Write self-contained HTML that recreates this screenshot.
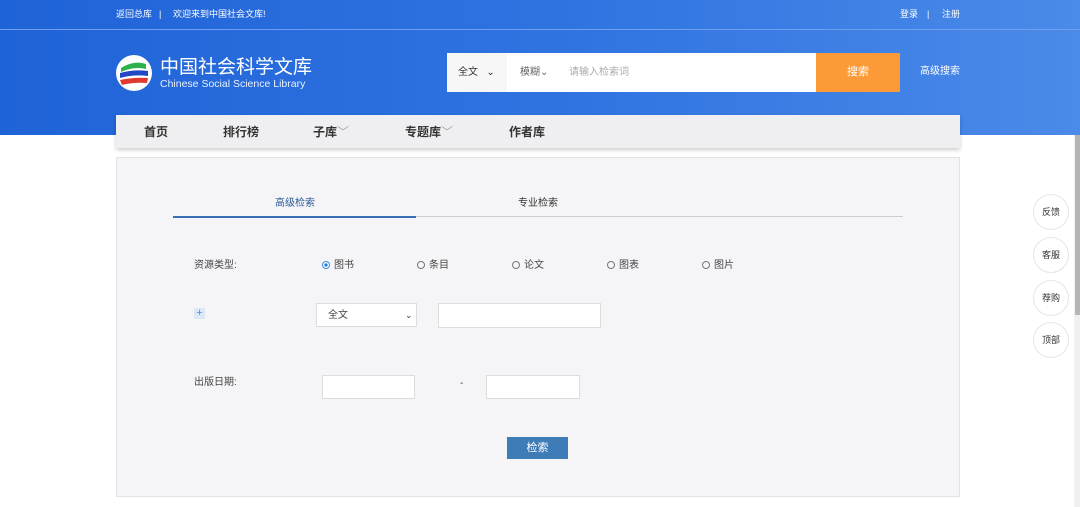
<!DOCTYPE html>
<html><head><meta charset="utf-8"><style>
*{margin:0;padding:0;box-sizing:border-box}
body{width:1080px;height:507px;overflow:hidden;background:#fff;font-family:"Liberation Sans","Noto Sans CJK SC",sans-serif;position:relative;font-size:12px;color:#333}
.hdr{position:absolute;left:0;top:0;width:1080px;height:135px;background:linear-gradient(90deg,#1f63d8 0%,#2f72e0 50%,#4a8ae8 100%)}
.top{position:absolute;left:0;top:0;width:1080px;height:30px;border-bottom:1px solid #6e9ff0;color:#fff;font-size:9px}
.a{position:absolute;white-space:nowrap;line-height:1.2}
.nav{position:absolute;left:116px;top:115px;width:844px;height:33px;background:#efeff1;box-shadow:0 2px 4px rgba(0,0,0,.2)}
.nav span{position:absolute;top:10px;font-size:12px;font-weight:bold;color:#333;line-height:14px}
.panel{position:absolute;left:116px;top:157px;width:844px;height:340px;background:#f5f5f7;border:1px solid #e3e3e6}
.r{position:absolute;font-size:10px;color:#444;white-space:nowrap;line-height:12px}
.r i{display:inline-block;width:8px;height:8px;border:1px solid #777;border-radius:50%;margin-right:4px;vertical-align:-1px}
.box{position:absolute;background:#fff;border:1px solid #ddd}
.side{position:absolute;left:1033px;width:36px;height:36px;border-radius:50%;background:#fff;border:1px solid #e5e5e5;font-size:9px;text-align:center;line-height:34px;color:#333}
</style></head><body>
<div class="hdr"></div>
<div class="top">
<span class="a" style="left:116px;top:9px">返回总库</span>
<span class="a" style="left:159px;top:9px">|</span>
<span class="a" style="left:173px;top:9px">欢迎来到中国社会文库!</span>
<span class="a" style="left:900px;top:9px">登录</span>
<span class="a" style="left:927px;top:9px">|</span>
<span class="a" style="left:942px;top:9px">注册</span>
</div>
<svg class="a" style="left:116px;top:54px" width="36" height="38" viewBox="0 0 36 38"><circle cx="18" cy="19" r="18" fill="#fff"/><path d="M5 14 Q18 6 30 10 L30 15 Q18 12 5 18Z" fill="#2bb24c"/><path d="M4 19 Q18 15 32 17 L32 22 Q18 20 4 24Z" fill="#2147c4"/><path d="M4 26 Q18 23 32 24 L31 29 Q18 28 6 31Z" fill="#e03a2e"/></svg>
<div class="a" style="left:160px;top:57px;color:#fff;font-size:19px;line-height:21px">中国社会科学文库</div>
<div class="a" style="left:160px;top:78px;color:#e8f0ff;font-size:10.5px;line-height:12px">Chinese Social Science Library</div>
<div class="a" style="left:447px;top:53px;width:369px;height:39px;background:#fff"></div>
<div class="a" style="left:447px;top:53px;width:60px;height:39px;background:#f7f7f7"></div>
<div class="a" style="left:458px;top:67px;font-size:10px;color:#333">全文 &nbsp;&nbsp;⌄</div>
<div class="a" style="left:520px;top:67px;font-size:10px;color:#666">模糊⌄</div>
<div class="a" style="left:569px;top:67px;font-size:10px;color:#aaa">请输入检索词</div>
<div class="a" style="left:816px;top:53px;width:84px;height:39px;background:#fd9a38;color:#fff;font-size:11px;text-align:center;line-height:39px">搜索</div>
<div class="a" style="left:920px;top:66px;font-size:10px;color:#fff">高级搜索</div>
<div class="nav">
<span style="left:28px">首页</span><span style="left:107px">排行榜</span><span style="left:197px">子库<b style="font-weight:normal;color:#aaa">﹀</b></span><span style="left:289px">专题库<b style="font-weight:normal;color:#aaa">﹀</b></span><span style="left:393px">作者库</span>
</div>
<div class="panel"></div>
<div class="a" style="left:173px;top:216px;width:730px;height:1px;background:#ccc"></div>
<div class="a" style="left:173px;top:216px;width:243px;height:2px;background:#3a6fb5"></div>
<div class="a" style="left:275px;top:198px;font-size:10px;color:#2c5b9a">高级检索</div>
<div class="a" style="left:518px;top:198px;font-size:10px;color:#333">专业检索</div>
<div class="r" style="left:194px;top:260px">资源类型:</div>
<div class="r" style="left:322px;top:260px"><i style="border-color:#3a8ee6;background:radial-gradient(#2a7fe0 35%,#fff 45%)"></i>图书</div>
<div class="r" style="left:417px;top:260px"><i></i>条目</div>
<div class="r" style="left:512px;top:260px"><i></i>论文</div>
<div class="r" style="left:607px;top:260px"><i></i>图表</div>
<div class="r" style="left:702px;top:260px"><i></i>图片</div>
<div class="a" style="left:194px;top:308px;width:11px;height:11px;background:#dde8f7;color:#5b8fd6;font-size:11px;line-height:10px;text-align:center">+</div>
<div class="box" style="left:316px;top:303px;width:101px;height:24px"></div>
<div class="r" style="left:328px;top:310px">全文</div>
<div class="r" style="left:405px;top:309px;font-size:9px">⌄</div>
<div class="box" style="left:438px;top:303px;width:163px;height:25px"></div>
<div class="r" style="left:194px;top:377px">出版日期:</div>
<div class="box" style="left:322px;top:375px;width:93px;height:24px"></div>
<div class="r" style="left:460px;top:378px">-</div>
<div class="box" style="left:486px;top:375px;width:94px;height:24px"></div>
<div class="a" style="left:507px;top:437px;width:61px;height:22px;background:#3e7cb8;color:#fff;font-size:11px;text-align:center;line-height:22px">检索</div>
<div class="side" style="top:194px">反馈</div>
<div class="side" style="top:237px">客服</div>
<div class="side" style="top:280px">荐购</div>
<div class="side" style="top:322px">顶部</div>
<div class="a" style="left:1074px;top:135px;width:6px;height:372px;background:#f0f0f0"></div>
<div class="a" style="left:1075px;top:135px;width:5px;height:180px;background:#b5b5b5"></div>
</body></html>
